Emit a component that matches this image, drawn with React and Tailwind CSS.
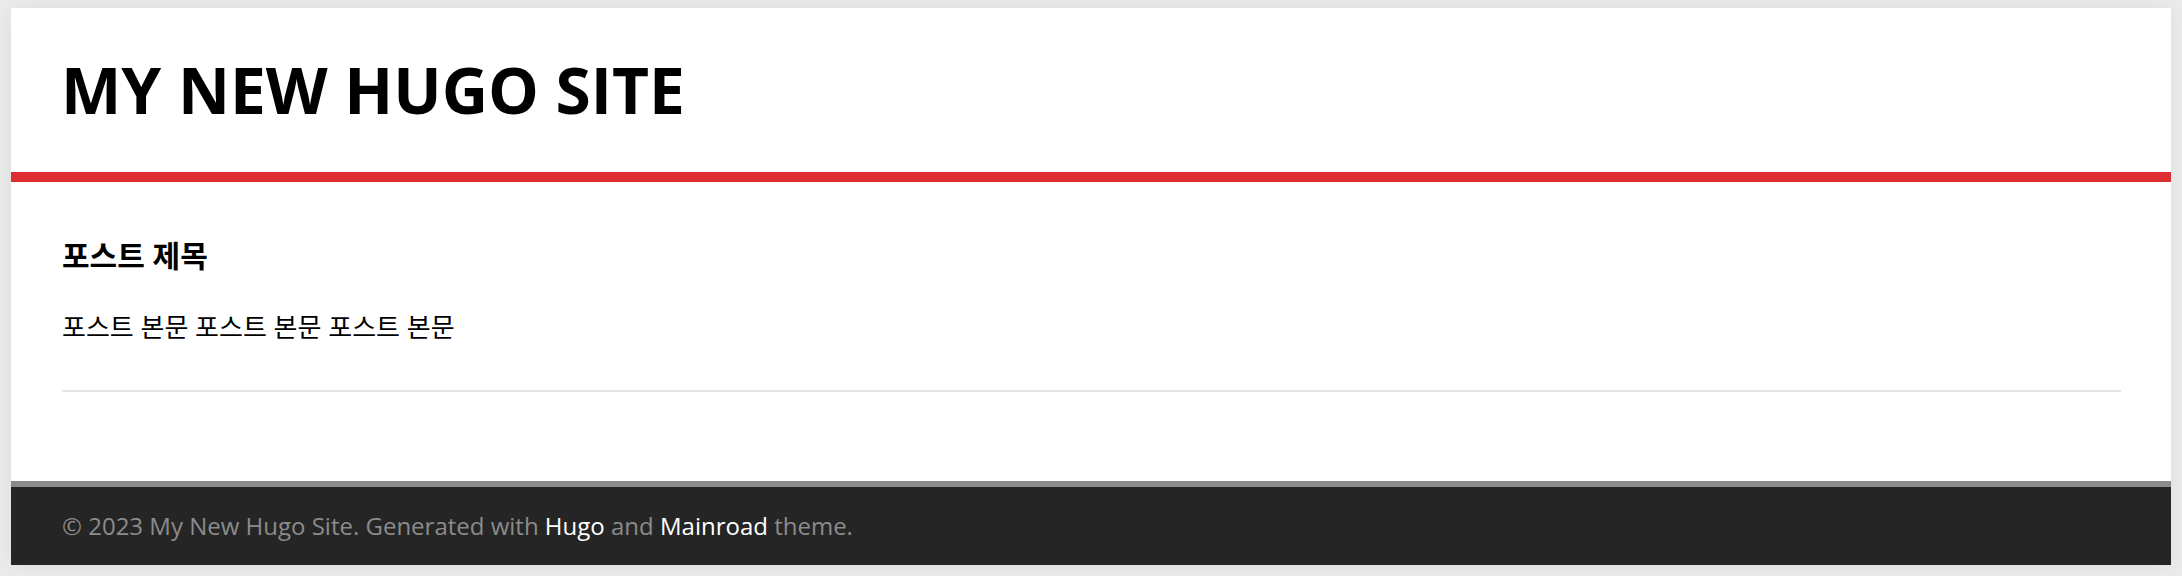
import React from "react";

const font = { fontFamily: '"Open Sans", "Noto Sans CJK KR", sans-serif' };

const App = () => {
  return (
    <div className="min-h-[576px] bg-[#ebebeb] pt-2 pb-[11px]" style={font}>
      <div className="mx-auto w-[2160px] bg-white shadow-[0_0_20px_rgba(0,0,0,0.06)]">
        {/* header */}
        <header className="h-[164px] flex items-center px-[50px]">
          <h1 className="text-[64px] font-bold uppercase leading-none text-black">
            My New Hugo Site
          </h1>
        </header>
        <div className="h-[10px] bg-[#dd2f31]" />

        {/* post */}
        <main className="px-[51px] pt-[54px] pb-[89px]">
          <h2 className="text-[30px] font-bold leading-[40px] text-black">포스트 제목</h2>
          <p className="mt-[33px] text-[26px] leading-[36px] text-black">
            포스트 본문 포스트 본문 포스트 본문
          </p>
          <hr className="mt-[45px] border-0 h-[2px] bg-[#e6e6e6] mr-[-1px]" />
        </main>

        {/* footer */}
        <footer className="border-t-[6px] border-[#8b8b8b] bg-[#252525] h-[84px] flex items-center px-[51px]">
          <p className="text-[24px] text-[#8b8b8b]">
            © 2023 My New Hugo Site. Generated with{" "}
            <a className="text-white">Hugo</a> and{" "}
            <a className="text-white">Mainroad</a> theme.
          </p>
        </footer>
      </div>
    </div>
  );
};

export default App;
